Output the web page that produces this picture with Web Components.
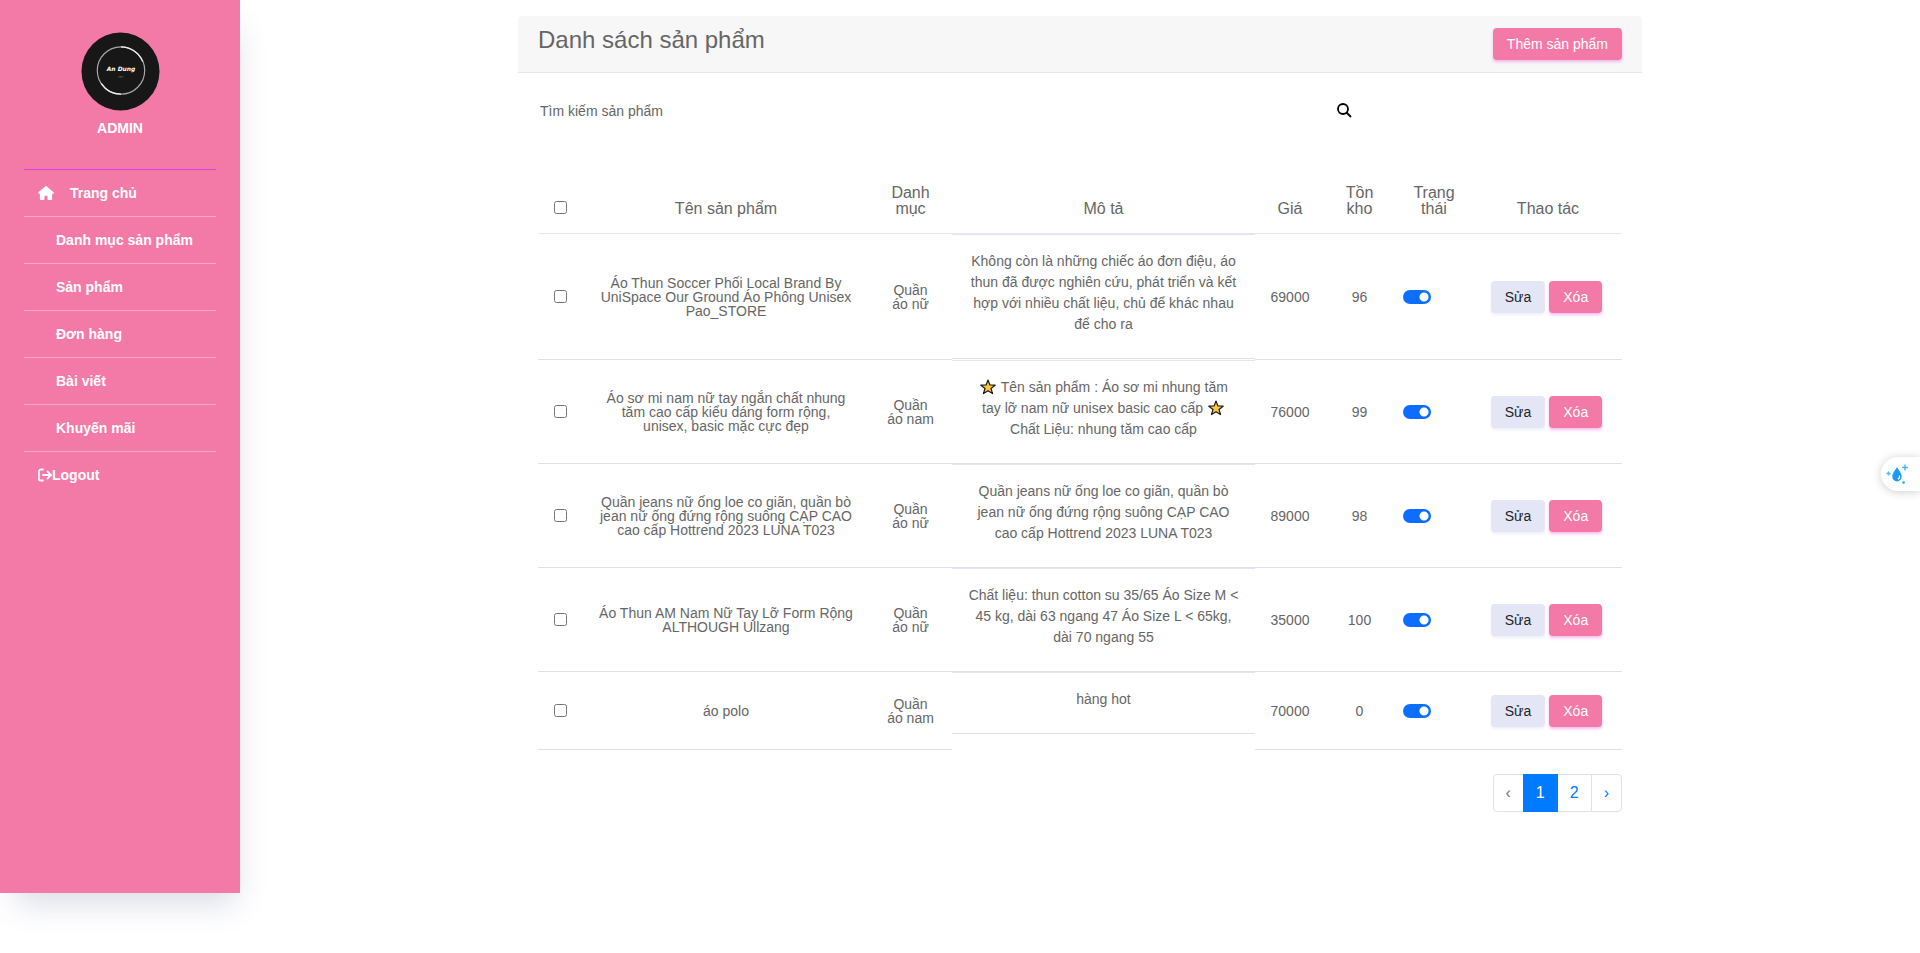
<!DOCTYPE html>
<html lang="vi">
<head>
<meta charset="utf-8">
<meta name="viewport" content="width=device-width, initial-scale=1">
<title>Danh sách sản phẩm</title>
<style>
  body {
    margin: 0;
    background: #fff;
    color: #666;
    font-family: "Liberation Sans", Arial, sans-serif;
    font-size: 14px;
    line-height: 21px;
  }
</style>
</head>
<body>
<admin-layout>
  <admin-sidebar slot="sidebar">
    <user-badge slot="profile">ADMIN</user-badge>
    <nav-item icon="home">Trang chủ</nav-item>
    <nav-item>Danh mục sản phẩm</nav-item>
    <nav-item>Sản phẩm</nav-item>
    <nav-item>Đơn hàng</nav-item>
    <nav-item>Bài viết</nav-item>
    <nav-item>Khuyến mãi</nav-item>
    <nav-item icon="logout">Logout</nav-item>
  </admin-sidebar>
  <panel-card>
    <span slot="title">Danh sách sản phẩm</span>
    <action-button slot="action">Thêm sản phẩm</action-button>
    <search-bar></search-bar>
    <product-table></product-table>
    <page-list></page-list>
  </panel-card>
</admin-layout>
<assist-tab></assist-tab>

<script>
const define = (name, html, setup) => {
  const template = document.createElement('template');
  template.innerHTML = html;
  customElements.define(name, class extends HTMLElement {
    constructor() {
      super();
      this.attachShadow({ mode: 'open' }).append(template.content.cloneNode(true));
    }
    connectedCallback() {
      if (setup && !this.ready) { this.ready = true; setup(this, this.shadowRoot); }
    }
  });
};

define('admin-layout', `
  <style>
    :host { display: flex; align-items: flex-start; min-height: 100vh; }
    main { flex: 1; min-width: 0; padding: 16px; }
    main ::slotted(*) { max-width: 1124px; margin: 0 auto; }
  </style>
  <slot name="sidebar"></slot>
  <main><slot></slot></main>`);

define('admin-sidebar', `
  <style>
    :host {
      display: block; box-sizing: border-box; flex: 0 0 240px;
      min-height: calc(100vh - 60px); padding: 32px 24px 24px;
      background: #f37aa6; color: #fff; font-weight: bold;
      box-shadow: 6px 20px 30px -10px rgba(70, 80, 130, .2);
    }
    nav { margin-top: 30px; border-top: 1px solid #e23ce0; }
  </style>
  <slot name="profile"></slot>
  <nav aria-label="Menu"><slot></slot></nav>`);

define('user-badge', `
  <style>
    :host { display: flex; flex-direction: column; align-items: center; gap: 7px; }
    svg { display: block; width: 80px; height: 79px; }
  </style>
  <svg viewBox="0 0 80 80" role="img" aria-label="An Dung">
    <circle cx="40.500" cy="40" r="39.500" fill="#171717"/>
    <circle cx="41" cy="39" r="24" fill="none" stroke="#a8a8a8" stroke-width="1.2"/>
    <path d="M41 15a24 24 0 0 1 22 15M41 63a24 24 0 0 1-20-11" fill="none" stroke="#eee" stroke-width="1.3"/>
    <text x="41" y="39" text-anchor="middle" fill="#fff" font-family="DejaVu Sans, sans-serif" font-size="6" font-style="italic" font-weight="bold">An Dung</text>
    <path d="M38.500 45.500h5" stroke="#666" stroke-width="1.200" stroke-dasharray="1 .6"/>
  </svg>
  <span class="name"><slot></slot></span>`);

const navIcons = {
  home: '<svg width="16" height="14" viewBox="0 0 576 512" fill="currentColor"><path d="M575.800 255.500c0 18-15 32.100-32 32.100h-32l.7 160.200c0 2.700-.2 5.400-.5 8.100V472c0 22.100-17.900 40-40 40h-88c-22.100 0-40-17.900-40-40v-88c0-17.700-14.300-32-32-32h-48c-17.700 0-32 14.300-32 32v88c0 22.100-17.900 40-40 40h-88c-22.100 0-40-17.900-40-40V287.600H32c-18 0-32-14-32-32.100 0-9 3-17 10-24L266.400 8c7-7 15-8 22-8s15 2 21 7l255.400 224.500c8 7 12 15 11 24z"/></svg>',
  logout: '<svg width="14" height="14" viewBox="0 0 14 14" fill="none" stroke="currentColor" stroke-width="1.800" stroke-linecap="round" stroke-linejoin="round"><path d="M5 1.500H3A1.800 1.800 0 0 0 1 3.300v7.400a1.800 1.800 0 0 0 1.800 1.800H5M5 7h8M9.500 3.500 13 7l-3.500 3.500"/></svg>'
};

define('nav-item', `
  <style>
    :host { display: block; border-bottom: 1px solid rgba(255, 255, 255, .35); }
    :host(:last-child) { border-bottom: 0; }
    a { display: flex; align-items: center; height: 46px; padding-left: 32px; color: inherit; text-decoration: none; }
    :host([icon]) a { padding-left: 14px; }
    :host([icon="home"]) a { gap: 16px; }
    svg { display: block; flex: none; }
  </style>
  <a href="#"><slot></slot></a>`,
  (host, root) => {
    const icon = navIcons[host.getAttribute('icon')];
    if (icon) root.querySelector('a').insertAdjacentHTML('afterbegin', icon);
  });

define('panel-card', `
  <style>
    :host { display: block; }
    header {
      display: flex; justify-content: space-between; align-items: flex-start;
      padding: 12px 20px; background: #f7f7f7;
      border-bottom: 1px solid #e4e5f5; border-radius: 4px 4px 0 0;
    }
    h1 { margin: 0; font-size: 24px; line-height: 24px; font-weight: normal; }
    .body { padding: 20px; }
  </style>
  <header><h1><slot name="title"></slot></h1><slot name="action"></slot></header>
  <div class="body"><slot></slot></div>`);

define('action-button', `
  <style>
    :host { display: inline-block; }
    button {
      display: block; height: 32px; padding: 0 14px; border: 0; border-radius: 4px;
      background: #f37aa6; color: #fff; font: inherit; line-height: 32px; cursor: pointer;
      box-shadow: 0 2px 3px rgba(226, 60, 224, .35);
    }
    :host([tone="light"]) button { background: #e4e6f5; color: #212529; box-shadow: 0 2px 3px rgba(228, 230, 245, .6); }
  </style>
  <button type="button"><slot></slot></button>`);

define('search-bar', `
  <style>
    :host { display: block; }
    form { display: flex; align-items: center; height: 36px; }
    input { flex: 0 0 798px; min-width: 0; box-sizing: border-box; padding: 2px; border: 0; outline: 0; background: none; color: inherit; font: inherit; }
    input::placeholder { color: #666; opacity: 1; }
    button { padding: 0; border: 0; background: none; color: #000; cursor: pointer; }
    svg { display: block; }
  </style>
  <form role="search" onsubmit="return false">
    <input type="text" placeholder="Tìm kiếm sản phẩm" aria-label="Tìm kiếm sản phẩm">
    <button type="submit" aria-label="Tìm kiếm">
      <svg width="16" height="16" viewBox="0 0 16 16" fill="none" stroke="currentColor" stroke-width="1.800"><circle cx="7" cy="6" r="5"/><path d="M10.500 9.500 15 14"/></svg>
    </button>
  </form>`);

define('toggle-switch', `
  <style>
    :host { display: block; width: 28px; height: 14px; }
    input {
      appearance: none; display: block; width: 28px; height: 14px; margin: 0; border-radius: 7px; cursor: pointer;
      background: #adb5bd radial-gradient(circle at 7px 7px, #fff 4px, transparent 5px);
    }
    input:checked { background: #0d6efd radial-gradient(circle at 21px 7px, #fff 4px, transparent 5px); }
  </style>
  <input type="checkbox" role="switch" aria-label="Trạng thái" checked>`);

define('star-icon', `
  <style>:host { display: inline-block; width: 16px; height: 16px; margin: 0 1px; vertical-align: -3px; } svg { display: block; }</style>
  <svg width="16" height="16" viewBox="0 0 16 16" aria-hidden="true"><path d="M8 1l1.900 5 5.300.2-4.200 3.300 1.500 5.100L8 11.700l-4.500 2.900L5 9.500.8 6.200 6.100 6z" fill="#ffc83d" stroke="#1c1c1c" stroke-width="1.200" stroke-linejoin="round"/></svg>`);

const star = '<star-icon></star-icon>';
const products = [
  ['Áo Thun Soccer Phối Local Brand By UniSpace Our Ground Áo Phông Unisex Pao_STORE', 'Quần áo nữ',
   'Không còn là những chiếc áo đơn điệu, áo thun đã được nghiên cứu, phát triển và kết hợp với nhiều chất liệu, chủ để khác nhau để cho ra', 69000, 96],
  ['Áo sơ mi nam nữ tay ngắn chất nhung tăm cao cấp kiểu dáng form rộng, unisex, basic mặc cực đẹp', 'Quần áo nam',
   `${star} Tên sản phẩm : Áo sơ mi nhung tăm<br>tay lỡ nam nữ unisex basic cao cấp ${star}<br>Chất Liệu: nhung tăm cao cấp`, 76000, 99],
  ['Quần jeans nữ ống loe co giãn, quần bò jean nữ ống đứng rộng suông CẠP CAO cao cấp Hottrend 2023 LUNA T023', 'Quần áo nữ',
   'Quần jeans nữ ống loe co giãn, quần bò jean nữ ống đứng rộng suông CẠP CAO cao cấp Hottrend 2023 LUNA T023', 89000, 98],
  ['Áo Thun AM Nam Nữ Tay Lỡ Form Rộng ALTHOUGH Ullzang', 'Quần áo nữ',
   'Chất liệu: thun cotton su 35/65 Áo Size M &lt; 45 kg, dài 63 ngang 47 Áo Size L &lt; 65kg, dài 70 ngang 55', 35000, 100],
  ['áo polo', 'Quần áo nam', 'hàng hot', 70000, 0]
];

define('product-table', `
  <style>
    :host { display: block; margin-top: 40px; }
    table { width: 100%; table-layout: fixed; border-collapse: separate; border-spacing: 0; text-align: center; }
    .check { width: 45px; } .name { width: 286px; } .category { width: 83px; } .description { width: 303px; }
    .price { width: 70px; } .stock { width: 69px; } .status { width: 80px; } .actions { width: 148px; }
    th { padding: 16px; border-bottom: 1px solid #e4e5f5; vertical-align: bottom; font-size: 16px; line-height: 16px; font-weight: normal; }
    th.tight { padding: 16px 10px; }
    td { box-sizing: border-box; height: 78px; padding: 16px; border-bottom: 1px solid #dee2e6; line-height: 14px; }
    td.numeric { padding: 16px 10px; }
    td.wide { padding: 16px 9px; }
    td.text { height: auto; padding: 0; border: 0; vertical-align: top; line-height: 21px; }
    tr:first-child td.text { padding-bottom: 1px; }
    .text p { margin: 0; padding: 16px 15px 23px; border: solid #dee2e6; border-width: 1px 0; border-top-color: #e4e5f5; }
    input { display: block; width: 13px; height: 13px; margin: 0; }
    th input { margin-bottom: 3px; }
    .buttons { display: flex; justify-content: center; gap: 4px; margin-right: 3px; }
  </style>
  <table>
    <colgroup><col class="check"><col class="name"><col class="category"><col class="description"><col class="price"><col class="stock"><col class="status"><col class="actions"></colgroup>
    <thead><tr>
      <th><input type="checkbox" aria-label="Chọn tất cả"></th><th>Tên sản phẩm</th><th>Danh mục</th><th>Mô tả</th>
      <th>Giá</th><th>Tồn kho</th><th class="tight">Trạng thái</th><th>Thao tác</th>
    </tr></thead>
    <tbody></tbody>
  </table>`,
  (host, root) => {
    root.querySelector('tbody').innerHTML = products.map(([name, category, text, price, stock]) => `
      <tr>
        <td><input type="checkbox" aria-label="Chọn sản phẩm"></td>
        <td>${name}</td>
        <td>${category.replace('Quần ', 'Quần<br>')}</td>
        <td class="text"><p>${text}</p></td>
        <td class="numeric">${price}</td>
        <td class="numeric">${stock}</td>
        <td class="wide"><toggle-switch></toggle-switch></td>
        <td class="wide"><div class="buttons"><action-button tone="light">Sửa</action-button><action-button>Xóa</action-button></div></td>
      </tr>`).join('');
  });

define('page-list', `
  <style>
    :host { display: block; margin-top: 24px; }
    ul { display: flex; justify-content: flex-end; margin: 0; padding: 0; list-style: none; font-size: 16px; line-height: 20px; }
    a, span { display: block; margin-left: -1px; padding: 8px 12px; border: 1px solid #dee2e6; color: #007bff; text-decoration: none; }
    span { color: #6c757d; }
    li:first-child > * { border-radius: 4px 0 0 4px; }
    li:last-child > * { border-radius: 0 4px 4px 0; }
    .active { position: relative; background: #007bff; border-color: #007bff; color: #fff; }
  </style>
  <ul>
    <li><span aria-disabled="true">‹</span></li>
    <li><a class="active" href="#" aria-current="page">1</a></li>
    <li><a href="#">2</a></li>
    <li><a href="#" rel="next">›</a></li>
  </ul>`);

define('assist-tab', `
  <style>
    :host { display: block; position: fixed; right: 0; top: 48%; }
    button {
      display: flex; align-items: center; width: 39px; height: 34px; padding: 0 0 0 5px;
      border: 0; border-radius: 17px 0 0 17px; background: #fff; box-shadow: 0 1px 10px rgba(0, 0, 0, .2); cursor: pointer;
    }
  </style>
  <button type="button" aria-label="Trợ lý">
    <svg width="23" height="22" viewBox="0 0 23 22">
      <path d="M11 4c1.500 3 4.700 6 4.700 9.700a4.700 4.700 0 0 1-9.400 0C6.300 10 9.500 7 11 4z" fill="#1b9cf2"/>
      <path d="M13.300 12.500c.6 1.800 0 3-1.400 3.600" fill="none" stroke="#fff" stroke-width="1.300"/>
      <path d="M19 1.500v6M16 4.500h6M2.500 8.500v4M.5 10.500h4M17.500 18v3M16 19.500h3" stroke="#4db8f5" stroke-width="1.500"/>
    </svg>
  </button>`);
</script>
</body>
</html>
